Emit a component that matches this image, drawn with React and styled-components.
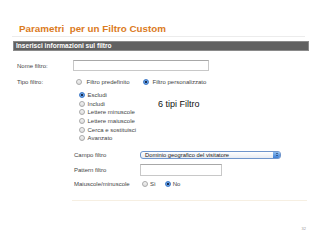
import React from 'react'
import styled, { createGlobalStyle } from 'styled-components'

const Global = createGlobalStyle`
  body {
    margin: 0;
    background: #fff;
    font-family: "Liberation Sans", Arial, sans-serif;
  }
`

const Slide = styled.div`
  width: 320px;
  height: 240px;
  background: #fff;
  display: flex;
  flex-direction: column;
  overflow: hidden;
`

const Title = styled.div`
  margin-top: 23px;
  padding-left: 19px;
  font-size: 9.8px;
  line-height: 12px;
  font-weight: bold;
  color: #db7b1e;
  white-space: pre;
`

const Rule = styled.div`
  margin: ${p => p.$top}px 0 0 ${p => p.$left}px;
  width: ${p => p.$width}px;
  height: 1px;
  background: ${p => p.$color};
`

const Panel = styled.div`
  margin: 4px 0 0 13px;
  width: 296px;
  display: flex;
  flex-direction: column;
  font-size: 6px;
  color: #444;
`

const Bar = styled.div`
  height: 10px;
  background: #616161;
  border: 1px solid #8a8a8a;
  box-sizing: border-box;
  color: #fff;
  font-weight: bold;
  font-size: 6.6px;
  line-height: 8px;
  padding-left: 2px;
`

const Row = styled.div`
  display: flex;
  align-items: center;
  height: ${p => p.$h || 10}px;
  margin-top: ${p => p.$top || 0}px;
  padding-left: ${p => p.$indent || 4}px;
`

const Label = styled.div`
  width: ${p => p.$w}px;
  flex-shrink: 0;
`

const Input = styled.div`
  width: ${p => p.$w}px;
  height: ${p => p.$h}px;
  box-sizing: border-box;
  border: 1px solid #c8c8c8;
  border-top-color: #a8a8a8;
  background: #fff;
`

const Radio = styled.span`
  width: 6px;
  height: 6px;
  border-radius: 50%;
  box-sizing: border-box;
  flex-shrink: 0;
  border: 1px solid ${p => (p.$on ? '#3c78c8' : '#a9a9a9')};
  background: ${p =>
    p.$on
      ? 'radial-gradient(circle, #1b2e52 0 1px, #6fa6e6 1.4px, #3f84d6 100%)'
      : 'linear-gradient(#f4f4f4, #dcdcdc)'};
`

const Option = styled.div`
  display: flex;
  align-items: center;
  gap: ${p => p.$gap || 3}px;
  height: ${p => p.$h || 8.6}px;
  margin-right: ${p => p.$mr || 0}px;
  white-space: nowrap;
`

const Types = styled.div`
  display: flex;
  margin-top: 4px;
  padding-left: 65.5px;
`

const TypeList = styled.div`
  display: flex;
  flex-direction: column;
  width: 79.5px;
`

const Note = styled.div`
  margin-top: 8px;
  font-size: 9px;
  line-height: 11px;
  color: #111;
`

const Select = styled.div`
  width: 141px;
  height: 8px;
  box-sizing: border-box;
  border: 1px solid #6f95cc;
  border-radius: 3px;
  background: linear-gradient(#ffffff, #e6ebf3);
  display: flex;
  align-items: center;
  padding-left: 4px;
  font-size: 5.8px;
  color: #222;
  position: relative;
  overflow: hidden;
`

const Stepper = styled.span`
  position: absolute;
  right: 0;
  top: 0;
  bottom: 0;
  width: 7px;
  background: linear-gradient(#8cbcf0, #3d7fd6);
  display: flex;
  flex-direction: column;
  align-items: center;
  justify-content: center;
  gap: 1px;
`

const Arrow = styled.span`
  width: 0;
  height: 0;
  border-left: 1.3px solid transparent;
  border-right: 1.3px solid transparent;
  ${p => (p.$up ? 'border-bottom' : 'border-top')}: 1.3px solid #10233f;
`

const Footer = styled.div`
  margin-top: auto;
  margin-bottom: 9px;
  padding-right: 14px;
  text-align: right;
  font-size: 4px;
  color: #9a9a9a;
`

const types = [
  ['Escludi', true],
  ['Includi'],
  ['Lettere minuscole'],
  ['Lettere maiuscole'],
  ['Cerca e sostituisci'],
  ['Avanzato'],
]

export default function App() {
  return (
    <Slide>
      <Global />
      <Title>{'Parametri  per un Filtro Custom'}</Title>
      <Rule $top={1} $left={12} $width={293} $color="#ececec" />
      <Panel>
        <Bar>Inserisci informazioni sul filtro</Bar>
        <Row $top={9} $h={11}>
          <Label $w={56}>Nome filtro:</Label>
          <Input $w={136} $h={11} />
        </Row>
        <Row $top={6}>
          <Label $w={58.5}>Tipo filtro:</Label>
          <Option $gap={5} $mr={13}>
            <Radio />
            Filtro predefinito
          </Option>
          <Option $gap={4}>
            <Radio $on />
            Filtro personalizzato
          </Option>
        </Row>
        <Types>
          <TypeList>
            {types.map(([name, on]) => (
              <Option key={name} $gap={3}>
                <Radio $on={on} />
                {name}
              </Option>
            ))}
          </TypeList>
          <Note>6 tipi Filtro</Note>
        </Types>
        <Row $top={7} $indent={61}>
          <Label $w={66}>Campo filtro</Label>
          <Select>
            Dominio geografico del visitatore
            <Stepper>
              <Arrow $up />
              <Arrow />
            </Stepper>
          </Select>
        </Row>
        <Row $top={4} $h={12} $indent={61}>
          <Label $w={66}>Pattern filtro</Label>
          <Input $w={82} $h={12} />
        </Row>
        <Row $top={3} $indent={61}>
          <Label $w={68}>Maiuscole/minuscole</Label>
          <Option $gap={2} $mr={9}>
            <Radio />
            Sì
          </Option>
          <Option $gap={2}>
            <Radio $on />
            No
          </Option>
        </Row>
      </Panel>
      <Rule $top={11} $left={72} $width={235} $color="#f6efe2" />
      <Footer>32</Footer>
    </Slide>
  )
}
